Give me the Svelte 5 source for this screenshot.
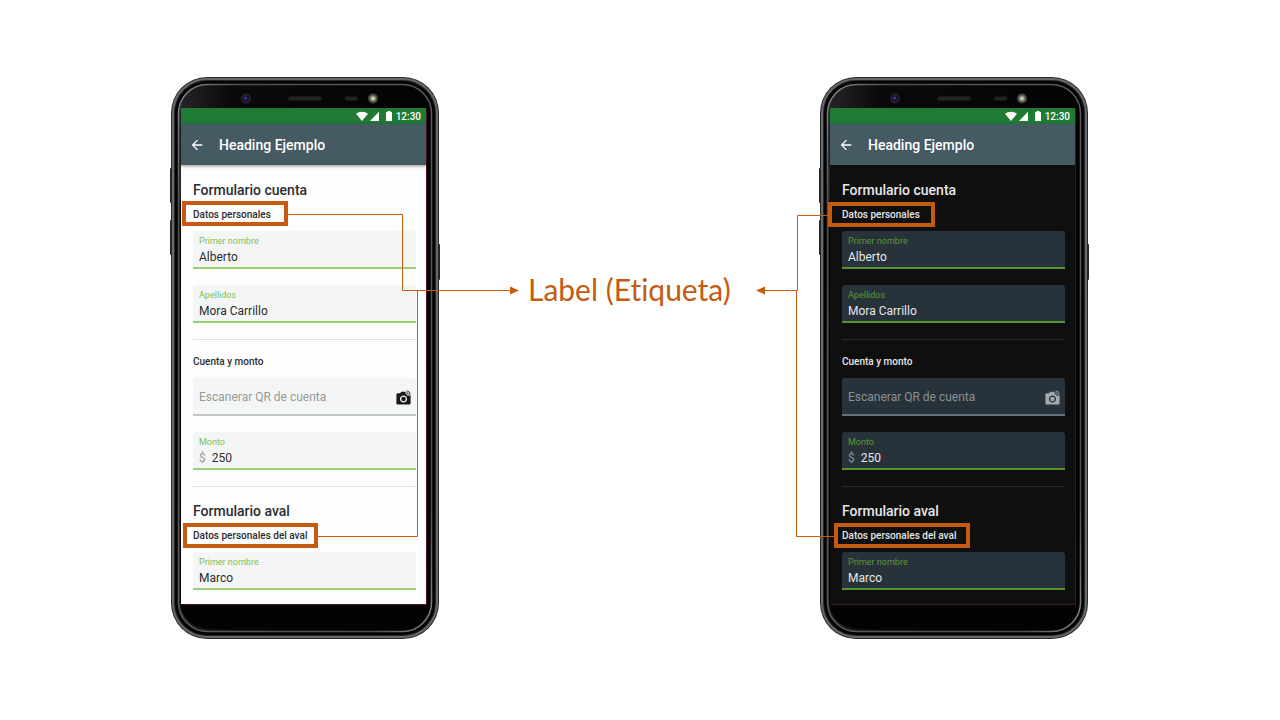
<script>
  const phones = [
    { id: 'light', name: 'Tema claro' },
    { id: 'dark', name: 'Tema oscuro' }
  ];
</script>

{#snippet field(id, label, value, prefix)}
  <div class="field">
    <label for={id}>{label}</label>
    <div class="entry">
      {#if prefix}<span class="prefix">{prefix}</span>{/if}
      <input {id} type="text" {value} />
    </div>
  </div>
{/snippet}

<main>
  <div class="board">
    {#each phones as phone (phone.id)}
      <section class="phone {phone.id}" aria-label={phone.name}>
        <svg class="shell" viewBox="0 0 272 562" aria-hidden="true">
          <defs>
            <linearGradient id="glass-{phone.id}" x1="0" x2="1" y1="0" y2="1">
              <stop offset="0" stop-color="#8a8b90" />
              <stop offset=".12" stop-color="#4c4d50" />
              <stop offset=".5" stop-color="#5a5b5e" />
              <stop offset=".88" stop-color="#4c4d50" />
              <stop offset="1" stop-color="#8a8b90" />
            </linearGradient>
            <linearGradient id="face-{phone.id}" x1="0" x2="1" y1="0" y2="0">
              <stop offset="0" stop-color="#26262a" />
              <stop offset=".2" stop-color="#0a0a0b" />
              <stop offset="1" stop-color="#030303" />
            </linearGradient>
          </defs>
          <rect x="1" y="91" width="4" height="35" rx="1" fill="#24252b" />
          <rect x="1" y="143" width="4" height="35" rx="1" fill="#24252b" />
          <rect x="267" y="167" width="4" height="36" rx="1" fill="#24252b" />
          <rect x="2" y="0" width="268" height="562" rx="36" fill="#28292b" />
          <rect x="4" y="2" width="264" height="558" rx="34" fill="none" stroke="#66686b" stroke-width="2" />
          <rect x="6" y="4" width="260" height="554" rx="32" fill="#030303" />
          <rect x="9.500" y="7.500" width="253" height="547" rx="29" fill="url(#face-{phone.id})" stroke="url(#glass-{phone.id})" stroke-width="1.500" />
          <rect x="11" y="100" width="250" height="452" rx="28" fill="#030303" />
          <circle cx="77" cy="21.500" r="5" fill="#242429" />
          <circle cx="77" cy="21.500" r="3.200" fill="#12123a" />
          <circle cx="76.500" cy="21" r="1.300" fill="#4643a0" />
          <rect x="119" y="19" width="34" height="5" rx="2.500" fill="#1c1c1d" />
          <path d="M121 21.500h30" stroke="#363637" stroke-dasharray="1 1" />
          <rect x="176" y="19.500" width="13" height="4" rx="2" fill="#222224" />
          <circle cx="204" cy="21.500" r="5" fill="#48473f" />
          <circle cx="204" cy="21.500" r="3" fill="#918d78" />
          <circle cx="204" cy="21.500" r="1.500" fill="#d9d5bd" />
        </svg>
        <div class="screen">
          <div class="status">
            <svg width="37" height="11" viewBox="0 0 37 11" fill="#fff" aria-hidden="true">
              <path d="M0 2.800C3.500 0 8.500 0 12 2.800L6 10z" />
              <path d="M23 .800V10h-9z" />
              <path d="M31.500 0h3v1h1.500v9h-6V1h1.500z" />
            </svg>
            <span>12:30</span>
          </div>
          <header>
            <button type="button" aria-label="Regresar">
              <svg width="16" height="16" viewBox="0 0 24 24" fill="#fff" aria-hidden="true">
                <path d="M20 11H7.830l5.590-5.590L12 4l-8 8 8 8 1.410-1.410L7.830 13H20v-2z" />
              </svg>
            </button>
            <h1>Heading Ejemplo</h1>
          </header>
          <form>
            <div class="group">
              <h2>Formulario cuenta</h2>
              <h3>Datos personales</h3>
              {@render field(`${phone.id}-nombre`, 'Primer nombre', 'Alberto')}
              {@render field(`${phone.id}-apellidos`, 'Apellidos', 'Mora Carrillo')}
            </div>
            <div class="group">
              <h3>Cuenta y monto</h3>
              <div class="field scan">
                <input type="text" placeholder="Escanerar QR de cuenta" aria-label="Escanerar QR de cuenta" />
                <button type="button" aria-label="Escanear">
                  <svg width="17" height="17" viewBox="0 0 24 24" fill="currentColor" aria-hidden="true">
                    <circle cx="12" cy="14" r="3.200" />
                    <path d="M16 3.330c2.580 0 4.670 2.090 4.670 4.670H22c0-3.310-2.690-6-6-6v1.330M16 6c1.110 0 2 .890 2 2h1.330c0-1.840-1.490-3.330-3.330-3.330V6" />
                    <path d="M17 9c0-1.110-.890-2-2-2V4H9L7.170 6H4c-1.100 0-2 .900-2 2v12c0 1.100.900 2 2 2h16c1.100 0 2-.900 2-2V9h-5zm-5 10c-2.760 0-5-2.240-5-5s2.240-5 5-5 5 2.240 5 5-2.240 5-5 5z" />
                  </svg>
                </button>
              </div>
              {@render field(`${phone.id}-monto`, 'Monto', '250', '$')}
            </div>
            <div class="group">
              <h2>Formulario aval</h2>
              <h3>Datos personales del aval</h3>
              {@render field(`${phone.id}-aval`, 'Primer nombre', 'Marco')}
            </div>
          </form>
        </div>
      </section>
      {#if phone.id === 'light'}
        <p class="caption">Label (Etiqueta)</p>
      {/if}
    {/each}

    <svg class="notes" viewBox="0 0 921 562" fill="none" stroke="#c55a11" aria-hidden="true">
      <g stroke-width="4">
        <rect x="15" y="126" width="102" height="21" />
        <rect x="16" y="448" width="131" height="21" />
        <rect x="661" y="127" width="103" height="21" />
        <rect x="667" y="448" width="132" height="21" />
      </g>
      <path d="M119 137.500h114.500v76H341" />
      <path d="M149 459.500h99.500v-246" />
      <path d="M659 138.500h-30.500v75H596" />
      <path d="M665 459.500h-37.500v-246" />
      <path d="M341 209.500l9 4-9 4zM596 209.500l-9 4 9 4z" fill="#c55a11" stroke="none" />
    </svg>
  </div>
</main>

<style>
  :global(body) {
    margin: 0;
    background: #fff;
  }
  main {
    box-sizing: border-box;
    min-height: 100vh;
    padding: 77px 21px 77px 0;
    display: flex;
    justify-content: center;
    align-items: flex-start;
    font-family: Roboto, sans-serif;
  }
  .board {
    position: relative;
    display: flex;
    flex: none;
  }
  .phone {
    --page: #fdfdfd;
    --ink: #2c2d2e;
    --fill: #f4f6f6;
    --green: #7fc050;
    --line: #9ccf73;
    --muted: #969998;
    --base: #c2c5c5;
    --rule: #dfe0e0;
    --icon: #17191b;
    position: relative;
    width: 272px;
    box-sizing: border-box;
    padding: 31px 15px 35px 12px;
  }
  .dark {
    --page: #0f0f0f;
    --ink: #e6e7e7;
    --fill: #27323b;
    --green: #5a9a32;
    --line: #56942f;
    --muted: #8a9196;
    --base: #66727b;
    --rule: #2b2b2b;
    --icon: #a4a9ad;
  }
  .shell,
  .notes {
    position: absolute;
    inset: 0;
    width: 100%;
    height: 100%;
    pointer-events: none;
  }
  .screen {
    position: relative;
    background: var(--page);
    color: var(--ink);
    box-shadow: 1px 1px 0 #4a1024;
  }
  .status {
    display: flex;
    justify-content: flex-end;
    align-items: center;
    gap: 3px;
    height: 16px;
    padding-right: 5px;
    background: #1f7a34;
    color: #fff;
    font-size: 10px;
    font-weight: 500;
  }
  header {
    position: relative;
    display: flex;
    align-items: center;
    gap: 14px;
    height: 41px;
    padding-left: 8px;
    background: #465a64;
    color: #fff;
    box-shadow: 0 1px 3px rgba(0, 0, 0, 0.45);
  }
  button {
    display: flex;
    padding: 0;
    border: 0;
    background: none;
    color: var(--icon);
  }
  h1,
  h2,
  h3,
  p {
    margin: 0;
  }
  h1,
  h2 {
    font-size: 14px;
    line-height: 20px;
    font-weight: 500;
  }
  h2 {
    margin-bottom: 7px;
  }
  h3 {
    margin-bottom: 8px;
    font-size: 10px;
    line-height: 16px;
    font-weight: 500;
  }
  form {
    padding: 1px 10px 14px 12px;
  }
  .group {
    padding-top: 14px;
  }
  .group + .group {
    margin-top: 16px;
    border-top: 1px solid var(--rule);
  }
  .field {
    box-sizing: border-box;
    height: 38px;
    padding: 4px 6px 0;
    border-bottom: 2px solid var(--line);
    border-radius: 3px 3px 0 0;
    background: var(--fill);
  }
  .field + .field {
    margin-top: 16px;
  }
  label {
    display: block;
    color: var(--green);
    font-size: 9px;
    line-height: 12px;
  }
  .entry {
    display: flex;
    gap: 6px;
    font-size: 12px;
    line-height: 20px;
  }
  .prefix {
    color: var(--muted);
  }
  input {
    flex: 1;
    min-width: 0;
    height: 20px;
    padding: 0;
    border: 0;
    outline: 0;
    background: none;
    color: inherit;
    font: inherit;
  }
  .scan {
    display: flex;
    align-items: center;
    padding: 2px 4px 0 6px;
    border-color: var(--base);
    font-size: 12px;
  }
  input::placeholder {
    color: var(--muted);
    opacity: 1;
  }
  .caption {
    box-sizing: border-box;
    width: 377px;
    padding: 192px 0 0 87px;
    color: #c55a11;
    font-family: Lato, sans-serif;
    font-size: 30px;
    line-height: 40px;
    font-variant-ligatures: none;
    white-space: nowrap;
  }
</style>
